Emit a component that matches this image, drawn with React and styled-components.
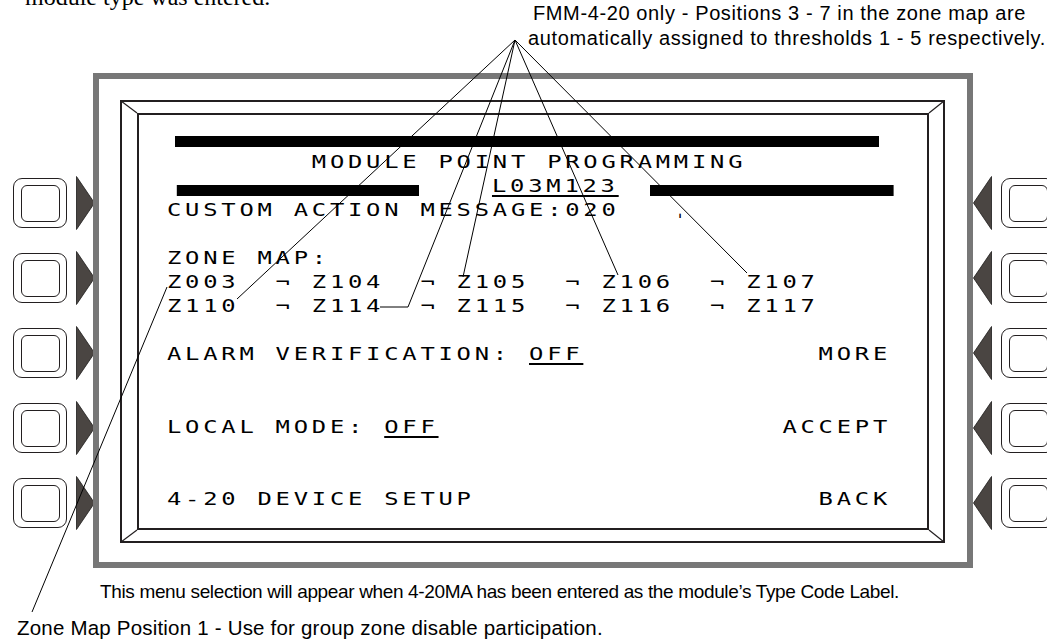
import React from "react";
import styled, { createGlobalStyle } from "styled-components";

const GlobalStyle = createGlobalStyle`
  html, body {
    margin: 0;
    padding: 0;
    background: #fff;
  }
  body {
    font-family: "Liberation Sans", Arial, sans-serif;
    color: #000;
  }
`;

// LCD character cell on the page, and the horizontal stretch of the LCD glyphs
const CELL = 18.1;
const SX = 1.4;
const U = CELL / SX; // cell width before the stretch
const px = (v) => `${v / SX}px`; // page pixels -> unstretched pixels

const zoneRows = [
  "Z003  \u00ac Z104  \u00ac Z105  \u00ac Z106  \u00ac Z107",
  "Z110  \u00ac Z114  \u00ac Z115  \u00ac Z116  \u00ac Z117",
];

const Arrow = ({ side }) => (
  <svg width="19" height="54" viewBox="0 0 19 54" style={{ flex: "none" }}>
    <polygon
      points={side === "left" ? "0.5,0.5 18.5,27 0.5,53.5" : "18.5,0.5 0.5,27 18.5,53.5"}
      fill="#4a4542"
      stroke="#1c1a19"
      strokeWidth="0.8"
    />
  </svg>
);

const Key = ({ side }) => (
  <KeyUnit>
    {side === "left" ? (
      <>
        <KeyCap>
          <KeyFace />
        </KeyCap>
        <Arrow side="left" />
      </>
    ) : (
      <>
        <Arrow side="right" />
        <KeyCap>
          <KeyFace />
        </KeyCap>
      </>
    )}
  </KeyUnit>
);

const App = () => {
  return (
    <Page>
      <GlobalStyle />
      <Header>
        <TopClip>
          <ClipText>module type was entered.</ClipText>
        </TopClip>
        <TopCallout>
          <CalloutLine $indent={533}>FMM-4-20 only - Positions 3 - 7 in the zone map are</CalloutLine>
          <CalloutLine $indent={528}>automatically assigned to thresholds 1 - 5 respectively.</CalloutLine>
        </TopCallout>
      </Header>

      <PanelRow>
        <Keys $side="left">
          {[0, 1, 2, 3, 4].map((i) => (
            <Key key={i} side="left" />
          ))}
        </Keys>

        <Frame>
          <Bezel>
            <Corners viewBox="0 0 825 443">
              <line x1="1" y1="1" x2="17" y2="13" />
              <line x1="824" y1="1" x2="809" y2="13" />
              <line x1="1" y1="442" x2="17" y2="430" />
              <line x1="824" y1="442" x2="809" y2="430" />
            </Corners>
            <Screen>
              <TopBar />
              <Lcd>
                <Row>{"        MODULE POINT PROGRAMMING"}</Row>
                <IdRow>
                  <Bar $ml={10} $w={242} />
                  <IdText>L03M123</IdText>
                  <Bar $ml={32} $w={243} />
                </IdRow>
                <Row>
                  <span>
                    {"CUSTOM ACTION MESSAGE:020   "}
                    <Tick>{"\u02cc"}</Tick>
                  </span>
                </Row>
                <Row />
                <Row>ZONE MAP:</Row>
                {zoneRows.map((z) => (
                  <Row key={z}>{z}</Row>
                ))}
                <Row />
                <Row>
                  <span>
                    {"ALARM VERIFICATION: "}
                    <Under>OFF</Under>
                  </span>
                  <span>MORE</span>
                </Row>
                <Row />
                <Row />
                <Row>
                  <span>
                    {"LOCAL MODE: "}
                    <Under>OFF</Under>
                  </span>
                  <span>ACCEPT</span>
                </Row>
                <Row />
                <Row />
                <Row>
                  <span>4-20 DEVICE SETUP</span>
                  <span>BACK</span>
                </Row>
              </Lcd>
            </Screen>
          </Bezel>
        </Frame>

        <Keys $side="right">
          {[0, 1, 2, 3, 4].map((i) => (
            <Key key={i} side="right" />
          ))}
        </Keys>
      </PanelRow>

      <BottomCallout>
        <CalloutLine $indent={100} $size={19} $track={-0.35}>
          This menu selection will appear when 4-20MA has been entered as the module’s Type Code Label.
        </CalloutLine>
        <CalloutLine $indent={17} $size={20.5} $track={0.2}>
          Zone Map Position 1 - Use for group zone disable participation.
        </CalloutLine>
      </BottomCallout>

      <Leaders viewBox="0 0 1047 639">
        <line x1="515" y1="40" x2="237" y2="299" />
        <polyline points="515,40 408,307 380,307" />
        <line x1="515" y1="40" x2="463" y2="277" />
        <line x1="515" y1="40" x2="618" y2="275" />
        <line x1="515" y1="40" x2="747" y2="273" />
        <line x1="167" y1="287" x2="32" y2="612" />
      </Leaders>
    </Page>
  );
};

const Page = styled.div`
  position: relative;
  width: 1047px;
  height: 639px;
  overflow: hidden;
  background: #fff;
`;

const Header = styled.header`
  display: grid;
  grid-template-areas: "stack";
  height: 73px;
`;

const TopClip = styled.div`
  grid-area: stack;
  align-self: start;
  height: 11px;
  overflow: hidden;
  padding-left: 25px;
  font-family: "Liberation Serif", "Times New Roman", serif;
  font-size: 24px;
  line-height: 24px;
`;

const ClipText = styled.div`
  margin-top: -15px;
  white-space: nowrap;
`;

const TopCallout = styled.div`
  grid-area: stack;
  padding-top: 1px;
  font-size: 20px;
  line-height: 25px;
  letter-spacing: 0.62px;
  white-space: nowrap;
`;

const CalloutLine = styled.div`
  padding-left: ${(p) => p.$indent}px;
  ${(p) => (p.$size ? `font-size: ${p.$size}px;` : "")}
  ${(p) => (p.$track !== undefined ? `letter-spacing: ${p.$track}px;` : "")}
`;

const BottomCallout = styled.div`
  padding-top: 6px;
  font-size: 20px;
  line-height: 36px;
  white-space: nowrap;
`;

const PanelRow = styled.div`
  display: flex;
  height: 495px;
`;

const Keys = styled.div`
  flex: none;
  display: flex;
  flex-direction: column;
  gap: 21px;
  box-sizing: border-box;
  width: ${(p) => (p.$side === "left" ? "93px" : "74px")};
  padding-top: 103px;
  padding-left: ${(p) => (p.$side === "left" ? "13px" : "0")};
`;

const KeyUnit = styled.div`
  display: flex;
  align-items: center;
  gap: 9px;
  height: 54px;
`;

const KeyCap = styled.div`
  flex: none;
  box-sizing: border-box;
  width: 54px;
  height: 50px;
  border: 1.3px solid #231f20;
  border-radius: 9px;
  display: flex;
  align-items: center;
  justify-content: center;
`;

const KeyFace = styled.div`
  box-sizing: border-box;
  width: 39px;
  height: 37px;
  border: 1.3px solid #231f20;
  border-radius: 6px;
`;

const Frame = styled.div`
  flex: none;
  box-sizing: border-box;
  width: 880px;
  height: 495px;
  border: 6px solid #777777;
  padding: 21px 0 0 21px;
`;

const Bezel = styled.div`
  position: relative;
  box-sizing: border-box;
  width: 825px;
  height: 443px;
  border: 2px solid #231f20;
  padding: 11px 0 0 15px;
`;

const Corners = styled.svg`
  position: absolute;
  left: -2px;
  top: -2px;
  width: 825px;
  height: 443px;
  pointer-events: none;
  line {
    stroke: #231f20;
    stroke-width: 1.2;
  }
`;

const Screen = styled.div`
  box-sizing: border-box;
  width: 792px;
  height: 417px;
  border: 2px solid #231f20;
  padding: 21px 0 0 28px;
  color: #000;
`;

const TopBar = styled.div`
  margin-left: 8px;
  width: 704px;
  height: 11px;
  background: #000;
`;

/* the display's glyphs are wide: the whole text block is stretched sideways,
   so horizontal sizes inside it are given in unstretched pixels */
const Lcd = styled.div`
  margin-top: 2.5px;
  transform: scaleX(${SX});
  transform-origin: 0 0;
  font-family: "DejaVu Sans Mono", "Liberation Mono", monospace;
  font-size: 17px;
  letter-spacing: ${U - 10.234}px;
`;

const Row = styled.div`
  display: flex;
  justify-content: space-between;
  width: ${U * 40}px;
  height: 24.1px;
  line-height: 24.1px;
  white-space: pre;
`;

const IdRow = styled.div`
  display: flex;
  align-items: flex-start;
  height: 24.1px;
  line-height: 24.1px;
  white-space: pre;
`;

const Bar = styled.div`
  flex: none;
  margin-top: 11px;
  margin-left: ${(p) => px(p.$ml)};
  width: ${(p) => px(p.$w)};
  height: 11px;
  background: #000;
`;

const IdText = styled.div`
  flex: none;
  margin-left: ${px(73)};
  text-decoration: underline;
  text-decoration-thickness: 1.5px;
  text-underline-offset: 3px;
`;

const Under = styled.span`
  text-decoration: underline;
  text-decoration-thickness: 1.5px;
  text-underline-offset: 3px;
`;

const Tick = styled.span`
  font-size: 15px;
  color: #000;
`;

const Leaders = styled.svg`
  position: absolute;
  left: 0;
  top: 0;
  width: 1047px;
  height: 639px;
  pointer-events: none;
  line,
  polyline {
    fill: none;
    stroke: #000;
    stroke-width: 1;
  }
`;

export default App;
